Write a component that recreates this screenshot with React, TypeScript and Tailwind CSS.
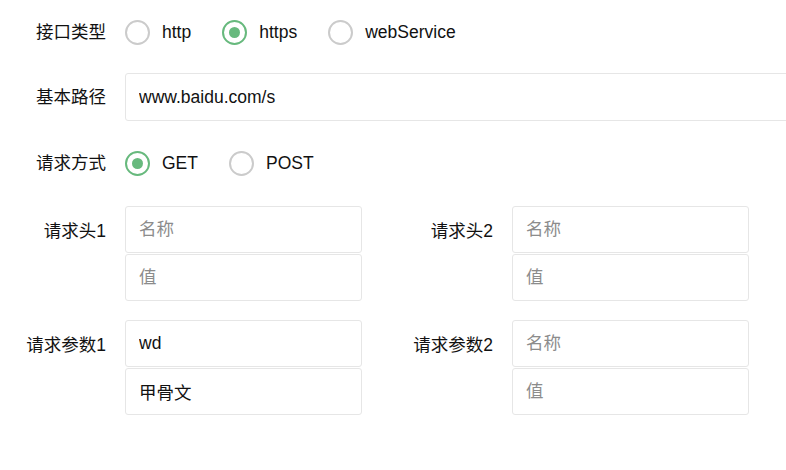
import { useState } from "react";

type Opt = { label: string; value: string };

function Radio({ options, value, onChange }: { options: Opt[]; value: string; onChange: (v: string) => void }) {
  return (
    <div className="flex items-center gap-[31px]">
      {options.map((o) => {
        const on = o.value === value;
        return (
          <label key={o.value} className="flex items-center gap-[12px] cursor-pointer" onClick={() => onChange(o.value)}>
            <span
              className={`flex h-[25px] w-[25px] items-center justify-center rounded-full border-2 ${
                on ? "border-[#67b97d]" : "border-[#cbcbcb]"
              }`}
            >
              {on && <span className="h-[11px] w-[11px] rounded-full bg-[#67b97d]" />}
            </span>
            <span className="text-[17.5px] text-[#111]">{o.label}</span>
          </label>
        );
      })}
    </div>
  );
}

function Field({ placeholder, defaultValue, className = "" }: { placeholder?: string; defaultValue?: string; className?: string }) {
  return (
    <input
      placeholder={placeholder}
      defaultValue={defaultValue}
      className={`h-[47px] rounded-[3px] border border-[#e6e6e6] bg-white px-[13px] text-[17.5px] text-[#111] outline-none placeholder:text-[#8c8c8c] ${className}`}
    />
  );
}

function Pair({ label, name, value }: { label: string; name?: string; value?: string }) {
  return (
    <div className="flex shrink-0">
      <div className="w-[106px] shrink-0 pt-[12px] text-right text-[17.5px] text-[#111]">{label}</div>
      <div className="ml-[19px] flex w-[237px] flex-col gap-px">
        <Field placeholder="名称" defaultValue={name} className="w-full" />
        <Field placeholder="值" defaultValue={value} className="w-full" />
      </div>
    </div>
  );
}

export default function App() {
  const [proto, setProto] = useState("https");
  const [method, setMethod] = useState("GET");

  return (
    <div
      className="h-[470px] w-[786px] overflow-hidden bg-white pt-[8px]"
      style={{ fontFamily: '"Liberation Sans", Arial, "Noto Sans CJK SC", sans-serif' }}
    >
      {/* 接口类型 */}
      <div className="flex h-[48px] items-center">
        <div className="w-[106px] shrink-0 text-right text-[17.5px] text-[#111]">接口类型</div>
        <div className="ml-[19px]">
          <Radio
            value={proto}
            onChange={setProto}
            options={[
              { label: "http", value: "http" },
              { label: "https", value: "https" },
              { label: "webService", value: "webService" },
            ]}
          />
        </div>
      </div>

      {/* 基本路径 */}
      <div className="mt-[17px] flex h-[48px] items-center">
        <div className="w-[106px] shrink-0 text-right text-[17.5px] text-[#111]">基本路径</div>
        <Field defaultValue="www.baidu.com/s" className="ml-[19px] h-[48px] w-[700px] shrink-0" />
      </div>

      {/* 请求方式 */}
      <div className="mt-[18px] flex h-[48px] items-center">
        <div className="w-[106px] shrink-0 text-right text-[17.5px] text-[#111]">请求方式</div>
        <div className="ml-[19px]">
          <Radio
            value={method}
            onChange={setMethod}
            options={[
              { label: "GET", value: "GET" },
              { label: "POST", value: "POST" },
            ]}
          />
        </div>
      </div>

      {/* headers */}
      <div className="mt-[19px] flex gap-[25px]">
        <Pair label="请求头1" />
        <Pair label="请求头2" />
      </div>

      {/* params */}
      <div className="mt-[19px] flex gap-[25px]">
        <Pair label="请求参数1" name="wd" value="甲骨文" />
        <Pair label="请求参数2" />
      </div>
    </div>
  );
}
